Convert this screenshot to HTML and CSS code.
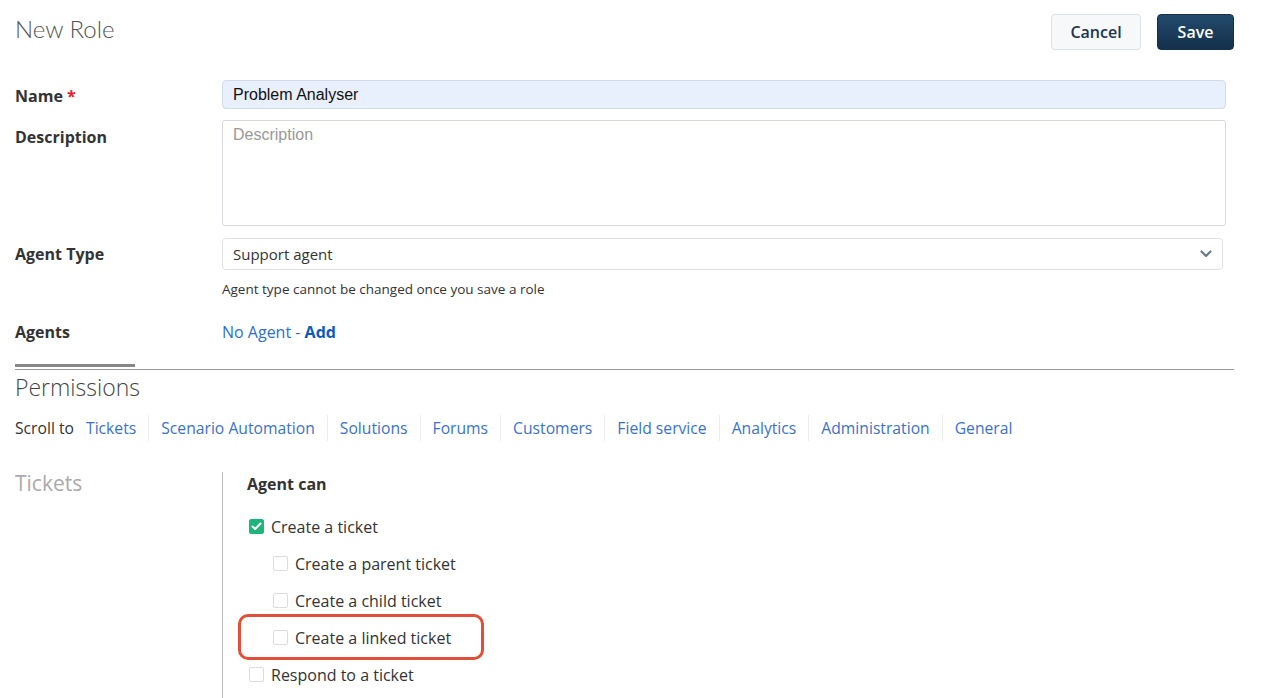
FILE: index.html
```html
<!DOCTYPE html>
<html>
<head>
<meta charset="utf-8">
<link rel="stylesheet" href="styles.css">
</head>
<body>
<div class="page">
  <header class="top">
    <h1 class="title">New Role</h1>
    <div class="actions">
      <button class="btn btn-cancel">Cancel</button>
      <button class="btn btn-save">Save</button>
    </div>
  </header>

  <div class="form">
    <div class="row row-name">
      <label class="lbl">Name <span class="req">*</span></label>
      <div class="input filled">Problem Analyser</div>
    </div>
    <div class="row row-desc">
      <label class="lbl">Description</label>
      <div class="textarea">Description</div>
    </div>
    <div class="row row-type">
      <label class="lbl">Agent Type</label>
      <div class="field">
        <div class="select">
          <span>Support agent</span>
          <svg class="chev" width="12" height="8" viewBox="0 0 12 8"><path d="M1.5 1.5 L6 6 L10.5 1.5" fill="none" stroke="#6b7a8a" stroke-width="2.2" stroke-linecap="round" stroke-linejoin="round"/></svg>
        </div>
        <div class="hint">Agent type cannot be changed once you save a role</div>
      </div>
    </div>
    <div class="row row-agents">
      <label class="lbl">Agents</label>
      <div class="agents"><span class="noagent">No Agent - </span><a class="add">Add</a></div>
    </div>
  </div>

  <div class="divider"><span class="divider-bar"></span></div>
  <h2 class="perm">Permissions</h2>

  <nav class="scroll">
    <span class="scroll-lbl">Scroll to</span>
    <a class="sl">Tickets</a>
    <a class="sl">Scenario Automation</a>
    <a class="sl">Solutions</a>
    <a class="sl">Forums</a>
    <a class="sl">Customers</a>
    <a class="sl">Field service</a>
    <a class="sl">Analytics</a>
    <a class="sl">Administration</a>
    <a class="sl last">General</a>
  </nav>

  <section class="section">
    <h3 class="sec-title">Tickets</h3>
    <div class="sec-body">
      <div class="agent-can">Agent can</div>
      <ul class="checks">
        <li class="chk"><span class="box checked"><svg width="11" height="9" viewBox="0 0 11 9"><path d="M1.5 4.5 L4.2 7 L9.5 1.5" fill="none" stroke="#fff" stroke-width="2" stroke-linecap="round" stroke-linejoin="round"/></svg></span>Create a ticket</li>
        <li class="chk sub"><span class="box"></span>Create a parent ticket</li>
        <li class="chk sub"><span class="box"></span>Create a child ticket</li>
        <li class="chk sub highlight"><span class="box"></span>Create a linked ticket</li>
        <li class="chk"><span class="box"></span>Respond to a ticket</li>
      </ul>
    </div>
  </section>
</div>
</body>
</html>
```
FILE: styles.css
```css
*, *::before, *::after { box-sizing: border-box; }
html, body { margin: 0; padding: 0; background: #fff; }
body {
  font-family: "Open Sans", "Noto Sans", "Liberation Sans", sans-serif;
  color: #333;
  overflow: hidden;
  height: 698px;
}
.page { padding: 0 30px 0 15px; width: 1264px; }

.top { display: flex; justify-content: space-between; align-items: flex-start; height: 80px; }
.title {
  margin: 14px 0 0 0;
  font-family: Lato, sans-serif;
  font-weight: 300;
  font-size: 24px;
  color: #555;
  line-height: 30px;
}
.actions { display: flex; gap: 16px; margin-top: 14px; }
.btn {
  height: 36px;
  border-radius: 4px;
  font-family: "Open Sans", sans-serif;
  font-size: 16px;
  font-weight: 600;
  cursor: pointer;
}
.btn-cancel {
  width: 90px;
  background: #f6f8fa;
  border: 1px solid #dde2e7;
  color: #1e3450;
}
.btn-save {
  width: 77px;
  background: linear-gradient(#234a6c, #14304b);
  border: 1px solid #14304b;
  color: #fff;
}

.form { display: flex; flex-direction: column; }
.row { display: grid; grid-template-columns: 207px 1fr; }
.lbl { font-weight: 700; font-size: 16px; color: #333; }
.req { color: #e2222a; }

.row-name { height: 40px; }
.row-name .lbl { padding-top: 5px; }
.input {
  height: 29px;
  width: 1004px;
  border: 1px solid #d3dbe6;
  border-radius: 4px;
  background: #e8f0fe;
  font-family: "Liberation Sans", Arial, sans-serif;
  font-size: 16px;
  color: #111;
  padding: 4px 10px;
  line-height: 19px;
}
.row-desc { height: 118px; }
.row-desc .lbl { padding-top: 6px; }
.textarea {
  height: 106px;
  width: 1004px;
  border: 1px solid #d6dade;
  border-radius: 3px;
  font-family: "Liberation Sans", Arial, sans-serif;
  font-size: 16px;
  color: #999;
  padding: 5px 10px;
}
.row-type { height: 83px; }
.row-type .lbl { padding-top: 5px; }
.select {
  height: 32px;
  width: 1001px;
  border: 1px solid #dfe3e7;
  border-radius: 4px;
  display: flex;
  align-items: center;
  justify-content: space-between;
  padding: 0 10px;
  font-size: 15px;
  color: #333;
}
.hint { font-size: 13.5px; color: #333; margin-top: 10px; }

.row-agents { height: 43px; }
.agents { font-size: 16px; }
.noagent { color: #2d6fcc; }
.add { color: #0c5bbf; font-weight: 700; }

.divider { border-bottom: 1px solid #9a9a9a; height: 6px; width: 1219px; }
.divider-bar { display: block; width: 120px; height: 3px; background: #888; }
.perm {
  margin: 1px 0 0 0;
  font-family: "Open Sans", sans-serif;
  font-weight: 300;
  font-size: 23px;
  color: #444;
  line-height: 32px;
}

.scroll { display: flex; align-items: center; margin-top: 11px; height: 28px; font-size: 15.7px; }
.scroll-lbl { color: #333; margin-right: 12px; }
.sl { color: #3a72c8; padding: 0 12px; border-right: 1px solid #ececec; line-height: 26px; }
.sl:nth-child(2) { padding-left: 0; }
.sl.last { border-right: none; }

.section { display: grid; grid-template-columns: 207px 1fr; margin-top: 30px; }
.sec-title {
  margin: -3px 0 0 0;
  font-family: "Open Sans", sans-serif;
  font-weight: 400;
  font-size: 21px;
  color: #aaa;
}
.sec-body { border-left: 1px solid #bbb; padding-left: 24px; padding-top: 1px; height: 300px; }
.agent-can { font-weight: 700; font-size: 16px; margin-top: 0; line-height: 22px; }
.checks { list-style: none; margin: 13px 0 0 2px; padding: 0; }
.chk { display: flex; align-items: center; height: 37px; font-size: 16px; color: #333; position: relative; }
.chk.sub { padding-left: 24px; }
.box {
  width: 15px; height: 15px;
  border: 1px solid #d9dde1;
  border-radius: 2px;
  margin-right: 7px;
  display: inline-flex; align-items: center; justify-content: center;
  background: #fff;
}
.box.checked { background: #1fb47a; border-color: #1fb47a; }
.highlight::after {
  content: "";
  position: absolute;
  left: -11px; top: -5px;
  width: 246px; height: 46px;
  border: 3px solid #e05039;
  border-radius: 10px;
}
```
